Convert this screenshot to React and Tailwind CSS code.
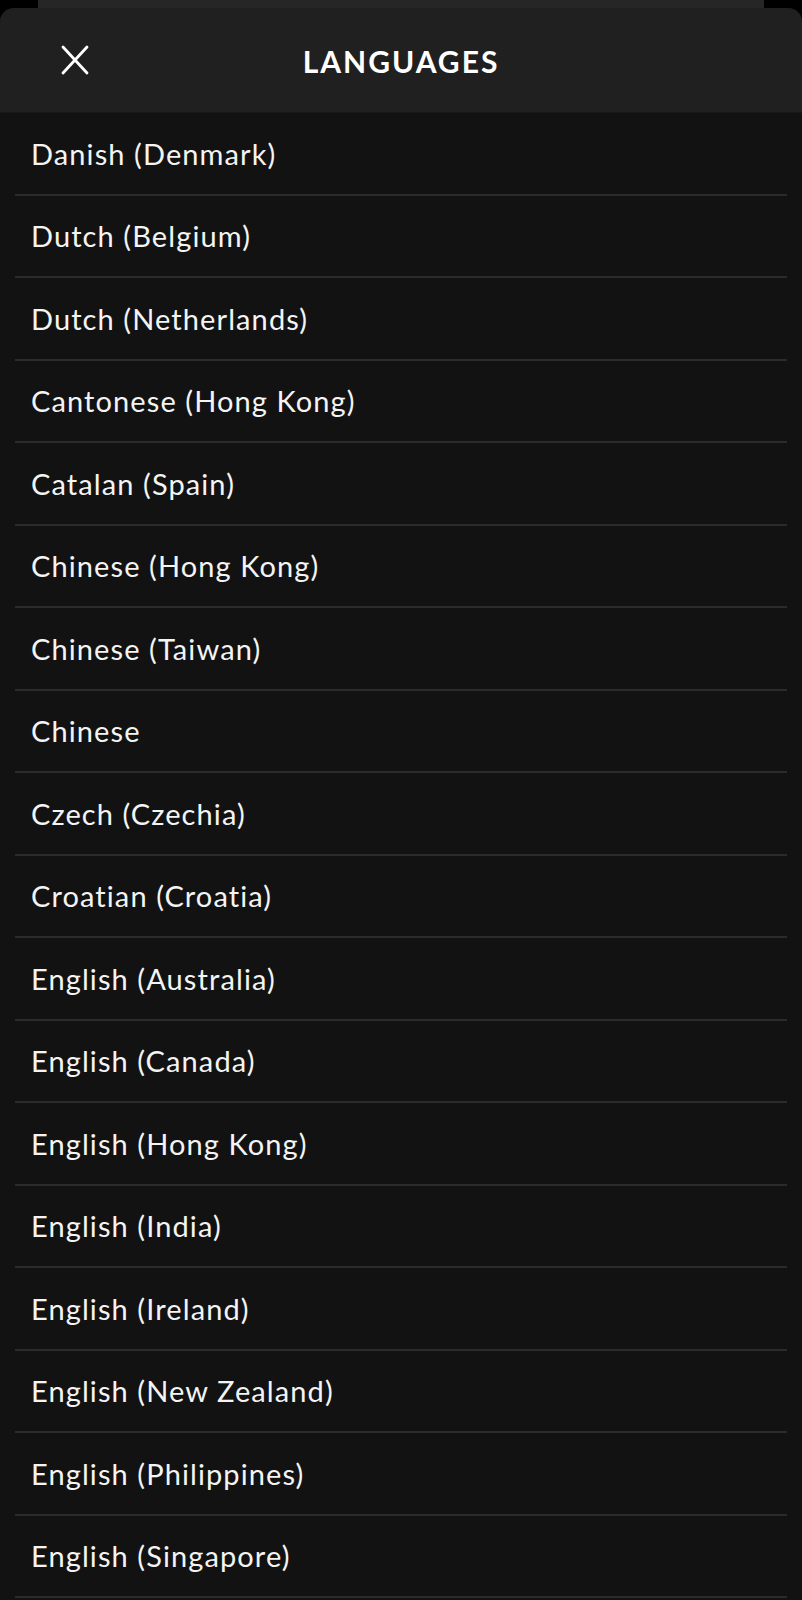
const languages = [
  'Danish (Denmark)',
  'Dutch (Belgium)',
  'Dutch (Netherlands)',
  'Cantonese (Hong Kong)',
  'Catalan (Spain)',
  'Chinese (Hong Kong)',
  'Chinese (Taiwan)',
  'Chinese',
  'Czech (Czechia)',
  'Croatian (Croatia)',
  'English (Australia)',
  'English (Canada)',
  'English (Hong Kong)',
  'English (India)',
  'English (Ireland)',
  'English (New Zealand)',
  'English (Philippines)',
  'English (Singapore)',
]

function CloseIcon() {
  return (
    <svg width="30" height="30" viewBox="0 0 30 30" fill="none" stroke="white" strokeWidth="2.8" strokeLinecap="round">
      <path d="M3 2 L27 28" />
      <path d="M27 2 L3 28" />
    </svg>
  )
}

export default function App() {
  return (
    <div className="h-[1600px] overflow-hidden bg-black" style={{ fontFamily: 'Lato, "Noto Sans", sans-serif' }}>
      <div className="h-[8px] px-[38px]">
        <div className="h-full bg-[#262626]" />
      </div>

      <div className="rounded-t-[14px] overflow-hidden bg-[#121212] min-h-[1592px]">
        <header className="h-[105px] bg-[#202020] border-b border-[#181818] flex items-center relative">
          <button className="absolute left-[60px] top-[37px] w-[30px] h-[30px] flex items-center justify-center">
            <CloseIcon />
          </button>
          <h1 className="w-full text-center text-white font-bold text-[30px] tracking-[2px] mt-[2px]">
            LANGUAGES
          </h1>
        </header>

        <ul className="px-[15px]">
          {languages.map((lang) => (
            <li
              key={lang}
              className="h-[82.5px] border-b-2 border-[#2b2b2b] flex items-center pl-[16px] text-[#f4f4f4] text-[29px] tracking-[1.1px]"
            >
              {lang}
            </li>
          ))}
        </ul>
      </div>
    </div>
  )
}
